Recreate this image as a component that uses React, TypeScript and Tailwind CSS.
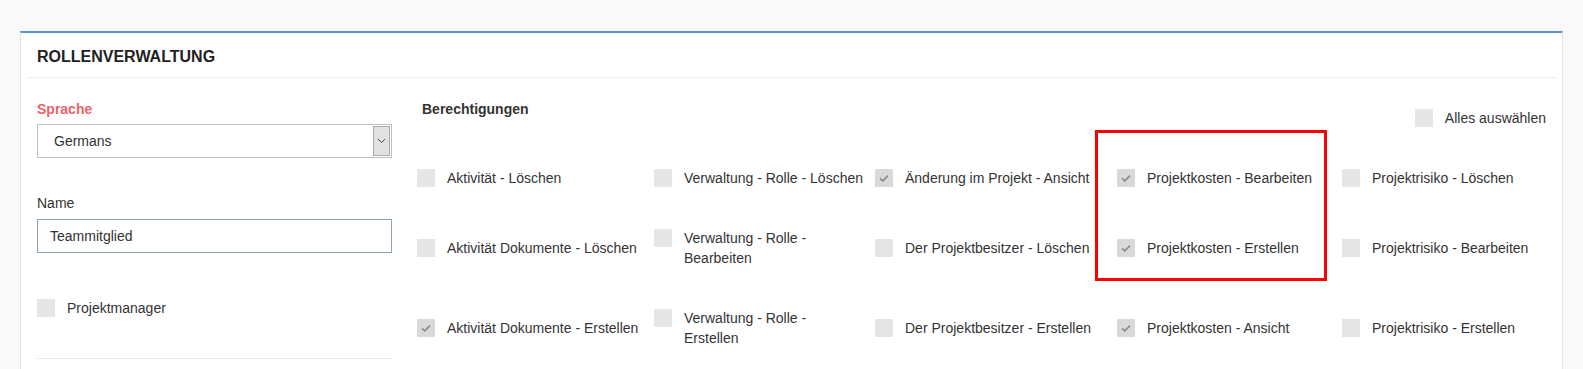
import React from 'react'

type Perm = { label: string; checked?: boolean }

const rows: Perm[][] = [
  [
    { label: 'Aktivität - Löschen' },
    { label: 'Verwaltung - Rolle - Löschen' },
    { label: 'Änderung im Projekt - Ansicht', checked: true },
    { label: 'Projektkosten - Bearbeiten', checked: true },
    { label: 'Projektrisiko - Löschen' },
  ],
  [
    { label: 'Aktivität Dokumente - Löschen' },
    { label: 'Verwaltung - Rolle - Bearbeiten' },
    { label: 'Der Projektbesitzer - Löschen' },
    { label: 'Projektkosten - Erstellen', checked: true },
    { label: 'Projektrisiko - Bearbeiten' },
  ],
  [
    { label: 'Aktivität Dokumente - Erstellen', checked: true },
    { label: 'Verwaltung - Rolle - Erstellen' },
    { label: 'Der Projektbesitzer - Erstellen' },
    { label: 'Projektkosten - Ansicht', checked: true },
    { label: 'Projektrisiko - Erstellen' },
  ],
]

function Box({ checked }: { checked?: boolean }) {
  return (
    <span
      className={`mt-[1px] flex h-[18px] w-[18px] shrink-0 items-center justify-center ${
        checked ? 'bg-[#d9d9d9]' : 'bg-[#e6e6e6]'
      }`}
    >
      {checked && (
        <svg width="18" height="18" viewBox="0 0 18 18" fill="none">
          <path d="M5 9.3 L7.8 11.8 L13 6.6" stroke="#8a8a8a" strokeWidth="1.6" />
        </svg>
      )}
    </span>
  )
}

export default function App() {
  return (
    <div className="min-h-[369px] bg-[#f9f9f9] pt-[31px] px-[20px] font-['Liberation_Sans',Arial,sans-serif] text-[14px] leading-[20px] text-[#333333]">
      <div className="border-t-2 border-x border-t-[#5b92d8] border-x-[#dde6f0] bg-white px-[6px] pb-[20px]">
        <div className="border-b border-[#eeeeee] px-[10px] pt-[14px] pb-[10px]">
          <h1 className="text-[16px] font-bold leading-[20px] text-[#222222]">ROLLENVERWALTUNG</h1>
        </div>

        <div className="flex px-[10px]">
          {/* linke Spalte */}
          <div className="w-[355px] shrink-0 pt-[21px]">
            <div className="font-bold text-[#ea636b]">Sprache</div>
            <div className="mt-[5px] flex h-[34px] items-stretch border border-[#b9c1cc]">
              <div className="flex flex-1 items-center pl-[16px]">Germans</div>
              <div className="my-px mr-px flex w-[17px] items-center justify-center border border-[#acacac] bg-[#e1e1e1]">
                <svg width="9" height="6" viewBox="0 0 9 6" fill="none">
                  <path d="M1 1 L4.5 4.5 L8 1" stroke="#444" strokeWidth="1" />
                </svg>
              </div>
            </div>

            <div className="mt-[35px]">Name</div>
            <div className="mt-[6px] flex h-[34px] items-center border border-[#8e9fb9] pl-[12px]">
              Teammitglied
            </div>

            <div className="mt-[45px] flex items-start gap-[12px]">
              <Box />
              <span>Projektmanager</span>
            </div>

            <div className="mt-[40px] border-t border-[#e6eaee]" />
          </div>

          {/* rechte Spalte */}
          <div className="ml-[25px] flex-1 pt-[21px]">
            <div className="flex items-start justify-between">
              <div className="pl-[5px] font-bold">Berechtigungen</div>
              <div className="mt-[9px] flex items-start gap-[12px]">
                <Box />
                <span>Alles auswählen</span>
              </div>
            </div>

            <div className="relative mt-[20px] grid grid-cols-[237px_221px_242px_225px_1fr] items-center">
              {rows.flat().map((p, i) => (
                <div key={i} className="flex items-start gap-[12px] py-[20px]">
                  <Box checked={p.checked} />
                  <span className={i % 5 === 1 ? 'max-w-[180.5px]' : ''}>{p.label}</span>
                </div>
              ))}
              <div className="absolute left-[678px] top-[-18px] h-[151px] w-[232px] border-[3px] border-[#ff0000]" />
            </div>
          </div>
        </div>
      </div>
    </div>
  )
}
